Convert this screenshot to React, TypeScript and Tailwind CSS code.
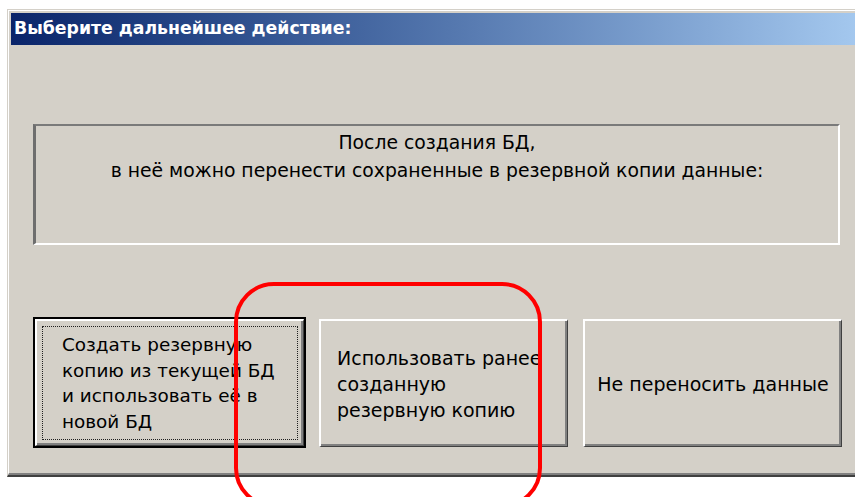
import type { ReactNode } from "react";

const font = { fontFamily: '"DejaVu Sans", Verdana, sans-serif' };

type RaisedButtonProps = {
  children: ReactNode;
  className?: string;
};

// classic 3D button face
const RaisedButton = ({ children, className }: RaisedButtonProps) => {
  return (
    <div
      className={
        "flex items-center border-t-2 border-l-2 border-r border-b border-t-white border-l-white border-r-[#404040] border-b-[#404040] bg-[#d4d0c8] shadow-[inset_-2px_-2px_0_#808080] " +
        (className ?? "")
      }
    >
      {children}
    </div>
  );
};

export default function App() {
  return (
    <div className="relative h-[497px] w-[855px] overflow-hidden bg-white text-black" style={font}>
      {/* window frame */}
      <div className="ml-[7px] mt-[9px] h-[468px] w-[860px] border-t border-l border-b-2 border-t-[#d4d0c8] border-l-[#d4d0c8] border-b-[#404040]">
        <div className="flex h-full flex-col border-t border-l border-b-2 border-t-white border-l-white border-b-[#808080] bg-[#d4d0c8] pt-[2px] pl-[2px]">
          <div className="flex h-[32px] shrink-0 items-center bg-gradient-to-r from-[#0a246a] to-[#a6caf0] pl-[3px] pb-[1px] text-[17.3px] font-bold text-white">
            Выберите дальнейшее действие:
          </div>

          <div className="flex flex-col pl-[22px]">
            {/* sunken info panel */}
            <div className="mt-[79px] h-[121px] w-[807px] border-t-2 border-l-[3px] border-r-2 border-b-2 border-t-[#7a7a7a] border-l-[#6e6e6e] border-r-white border-b-white pt-[3px] text-center text-[18.8px] leading-[28px]">
              <div>После создания БД,</div>
              <div>в неё можно перенести сохраненные в резервной копии данные:</div>
            </div>

            <div className="mt-[72px] flex items-start">
              {/* default button with focus rect */}
              <div className="h-[131px] w-[273px] border-2 border-black">
                <RaisedButton className="h-full w-full p-[5px]">
                  <div className="flex h-full w-full items-center border border-dotted border-[#202020] pl-[19px] text-[18.4px] leading-[25.5px]">
                    <div>
                      Создать резервную
                      <br />
                      копию из текущей БД
                      <br />
                      и использовать её в
                      <br />
                      новой БД
                    </div>
                  </div>
                </RaisedButton>
              </div>

              <RaisedButton className="ml-[13px] mt-[2px] h-[128px] w-[249px] pl-[16px] text-[19px] leading-[26px]">
                <div>
                  Использовать ранее
                  <br />
                  созданную
                  <br />
                  резервную копию
                </div>
              </RaisedButton>

              <RaisedButton className="ml-[15px] mt-[2px] h-[128px] w-[259px] justify-center text-[19px] leading-[26px]">
                <div>Не переносить данные</div>
              </RaisedButton>
            </div>
          </div>
        </div>
      </div>

      {/* red highlight ring */}
      <div className="pointer-events-none absolute left-[234px] top-[282px] h-[226px] w-[308px] rounded-[40px] border-4 border-[#ff0000]" />
    </div>
  );
}
